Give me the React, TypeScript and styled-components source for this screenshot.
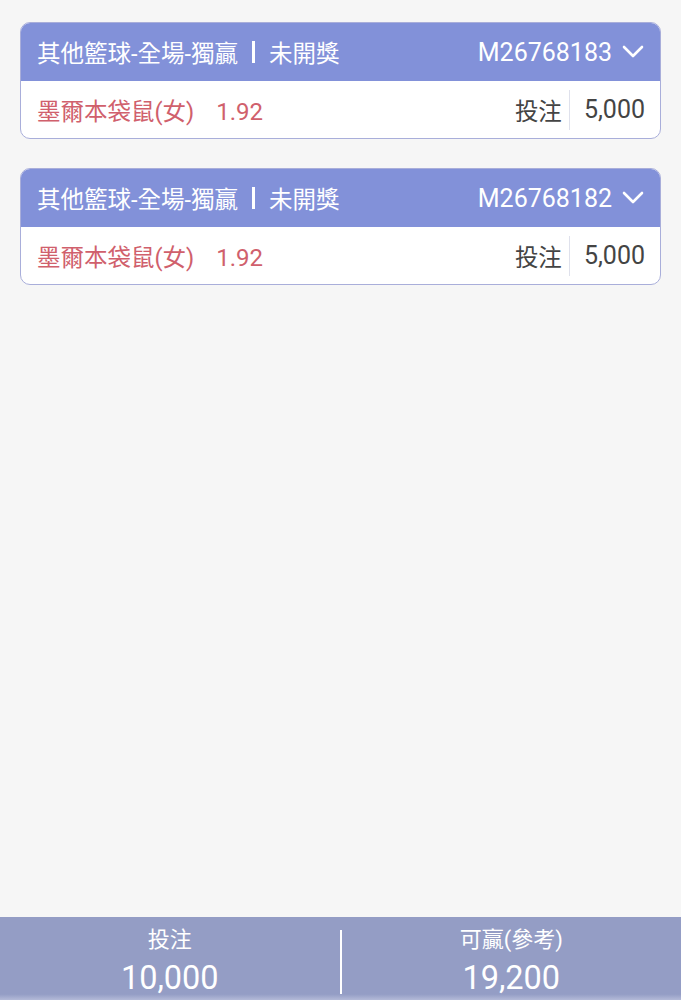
import React from 'react';
import styled, { createGlobalStyle } from 'styled-components';

const GlobalStyle = createGlobalStyle`
    html, body {
        margin : 0;
        padding : 0;
        background-color : #F6F6F6;
        font-family : Roboto, "Noto Sans CJK TC", sans-serif;
    }
`

const Page = styled.div`
    height : 100vh;
    display : flex;
    flex-direction : column;
`

const List = styled.div`
    flex : 1;
    padding : 22px 20px 0px 20px;
    display : flex;
    flex-direction : column;
    gap : 29px;
`

const Card = styled.div`
    background-color : #FFFFFF;
    border : 1px solid #A9AEDA;
    border-radius : 10px;
    overflow : hidden;
`

const CardHeader = styled.div`
    height : 58px;
    background-color : #8291D9;
    color : #FFFFFF;
    display : flex;
    align-items : center;
    padding : 0px 16px;
    font-size : 23.5px;
`

const Title = styled.span`
    flex : 1;
    display : flex;
    align-items : center;
`

const Bar = styled.span`
    width : 3px;
    height : 22px;
    background-color : #FFFFFF;
    margin : 0px 14px 0px 14px;
`

const OrderNo = styled.span`
    font-size : 25px;
    margin-right : 10px;
`

const CardBody = styled.div`
    height : 57px;
    display : flex;
    align-items : center;
    padding : 0px 15px 0px 16px;
    font-size : 23.5px;
`

const Pick = styled.span`
    color : #D0606C;
    flex : 1;
`

const Odds = styled.span`
    font-size : 24px;
    margin-left : 22px;
`

const StakeLabel = styled.span`
    color : #444444;
`

const VLine = styled.div`
    width : 1px;
    height : 40px;
    background-color : #DFE1EC;
    margin : 0px 14px 0px 7px;
`

const Amount = styled.span`
    color : #444444;
    font-size : 25px;
`

const Footer = styled.div`
    height : 83px;
    background : linear-gradient(to bottom, #949DC5 0%, #949DC5 93%, #B4BAD8 100%);
    display : flex;
    align-items : center;
    color : #FFFFFF;
`

const FooterCell = styled.div`
    flex : 1;
    display : flex;
    flex-direction : column;
    align-items : center;
    padding-top : 6px;
`

const FooterLabel = styled.span`
    font-size : 22px;
    line-height : 32px;
`

const FooterValue = styled.span`
    font-size : 32.5px;
    line-height : 44px;
`

const FooterLine = styled.div`
    width : 2px;
    height : 64px;
    background-color : #FFFFFF;
    margin-top : 6px;
`

const Chevron = () => (
    <svg width="22" height="14" viewBox="0 0 22 14">
        <path d="M2 2 L11 11 L20 2" fill="none" stroke="#FFFFFF" strokeWidth="2.6" strokeLinecap="round" strokeLinejoin="round"/>
    </svg>
)

const bets = [
    { id : 'M26768183', game : '其他籃球-全場-獨贏', status : '未開獎', pick : '墨爾本袋鼠(女)', odds : '1.92', stake : '5,000' },
    { id : 'M26768182', game : '其他籃球-全場-獨贏', status : '未開獎', pick : '墨爾本袋鼠(女)', odds : '1.92', stake : '5,000' },
]

const App = () => {
    return (
        <Page>
            <GlobalStyle/>
            <List>
                {bets.map((b) => (
                    <Card key={b.id}>
                        <CardHeader>
                            <Title>
                                {b.game}
                                <Bar/>
                                {b.status}
                            </Title>
                            <OrderNo>{b.id}</OrderNo>
                            <Chevron/>
                        </CardHeader>
                        <CardBody>
                            <Pick>
                                {b.pick}
                                <Odds>{b.odds}</Odds>
                            </Pick>
                            <StakeLabel>投注</StakeLabel>
                            <VLine/>
                            <Amount>{b.stake}</Amount>
                        </CardBody>
                    </Card>
                ))}
            </List>
            <Footer>
                <FooterCell>
                    <FooterLabel>投注</FooterLabel>
                    <FooterValue>10,000</FooterValue>
                </FooterCell>
                <FooterLine/>
                <FooterCell>
                    <FooterLabel>可贏(參考)</FooterLabel>
                    <FooterValue>19,200</FooterValue>
                </FooterCell>
            </Footer>
        </Page>
    )
}

export default App;
